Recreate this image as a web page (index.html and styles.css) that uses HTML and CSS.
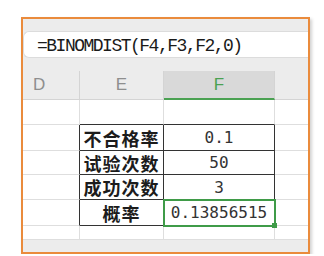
FILE: index.html
```html
<!DOCTYPE html>
<html lang="zh-CN">
<head>
    <meta charset="UTF-8">
    <meta name="viewport" content="width=device-width, initial-scale=1.0">
    <title>BINOMDIST</title>
    <link rel="stylesheet" href="styles.css">
</head>
<body>
    <div class="frame">
        <div class="formula">=BINOMDIST(F4,F3,F2,0)</div>

        <div class="sheet">
            <div class="head col-d">D</div>
            <div class="head col-e">E</div>
            <div class="head col-f">F</div>
            <div class="head col-g"></div>

            <div class="cell r1"></div>
            <div class="cell r1 top"></div>
            <div class="cell r1 top"></div>
            <div class="cell r1"></div>

            <div class="cell r2 edge"></div>
            <div class="cell r2 box label">不合格率</div>
            <div class="cell r2 box num">0.1</div>
            <div class="cell r2"></div>

            <div class="cell r3 edge"></div>
            <div class="cell r3 box label">试验次数</div>
            <div class="cell r3 box num">50</div>
            <div class="cell r3"></div>

            <div class="cell r4 edge"></div>
            <div class="cell r4 box label">成功次数</div>
            <div class="cell r4 box num">3</div>
            <div class="cell r4"></div>

            <div class="cell r5 edge"></div>
            <div class="cell r5 box label">概率</div>
            <div class="cell r5 box num selected">0.13856515</div>
            <div class="cell r5"></div>

            <div class="cell r6"></div>
            <div class="cell r6"></div>
            <div class="cell r6"></div>
            <div class="cell r6"></div>
        </div>
    </div>
</body>
</html>
```

FILE: styles.css
```css
body {
    margin: 0;
    background-color: #fff;
}
.frame {
    margin: 17px 0 0 21px;
    width: 285px;
    height: 221px;
    border: 2px solid #ea8b3c;
    background-color: #ececec;
    box-shadow: 2px 2px 3px rgba(0, 0, 0, 0.18);
    padding-top: 12px;
    box-sizing: content-box;
    overflow: hidden;
}
.formula {
    height: 27px;
    box-sizing: border-box;
    background-color: #fff;
    border: 1px solid #dcdcdc;
    border-right: none;
    border-radius: 6px 0 0 6px;
    padding: 4px 0 0 13px;
    font-family: "Liberation Mono", monospace;
    font-size: 18px;
    letter-spacing: -1.5px;
    color: #1a1a1a;
    white-space: nowrap;
}
.sheet {
    margin-top: 13px;
    display: grid;
    grid-template-columns: 57px 84px 111px 1fr;
    grid-template-rows: 29px 25px 26px 24px 25px 26px 14px;
}
.head {
    display: flex;
    align-items: center;
    justify-content: center;
    box-sizing: border-box;
    border-right: 1px solid #d4d4d4;
    border-bottom: 1px solid #d4d4d4;
    font-family: "Liberation Sans", sans-serif;
    font-size: 17px;
    color: #8e8e8e;
}
.col-d {
    justify-content: flex-start;
    padding-left: 10px;
}
.col-f {
    background-color: #d9d9d9;
    color: #4aa152;
    border-bottom: 2px solid #4aa152;
}
.col-g {
    border-right: none;
}
.cell {
    display: flex;
    align-items: center;
    justify-content: center;
    box-sizing: border-box;
    background-color: #fff;
    border-right: 1px solid #dedede;
    border-bottom: 1px solid #dedede;
}
.cell:nth-child(4n) {
    border-right: none;
}
.top {
    border-bottom-color: #333;
}
.edge {
    border-right-color: #333;
}
.box {
    border-right-color: #333;
    border-bottom-color: #333;
}
.label {
    font-family: "Noto Sans CJK SC", sans-serif;
    font-weight: 700;
    font-size: 18px;
    letter-spacing: 1px;
    color: #1c1c1c;
}
.num {
    font-family: "DejaVu Sans Mono", monospace;
    font-size: 16px;
    color: #333;
}
.selected {
    position: relative;
}
.selected::after {
    content: "";
    position: absolute;
    top: -1px;
    left: -1px;
    right: -2px;
    bottom: -2px;
    border: 2px solid #3f9b48;
}
.selected::before {
    content: "";
    position: absolute;
    right: -3px;
    bottom: -3px;
    width: 5px;
    height: 5px;
    background-color: #3f9b48;
    z-index: 1;
}
```
